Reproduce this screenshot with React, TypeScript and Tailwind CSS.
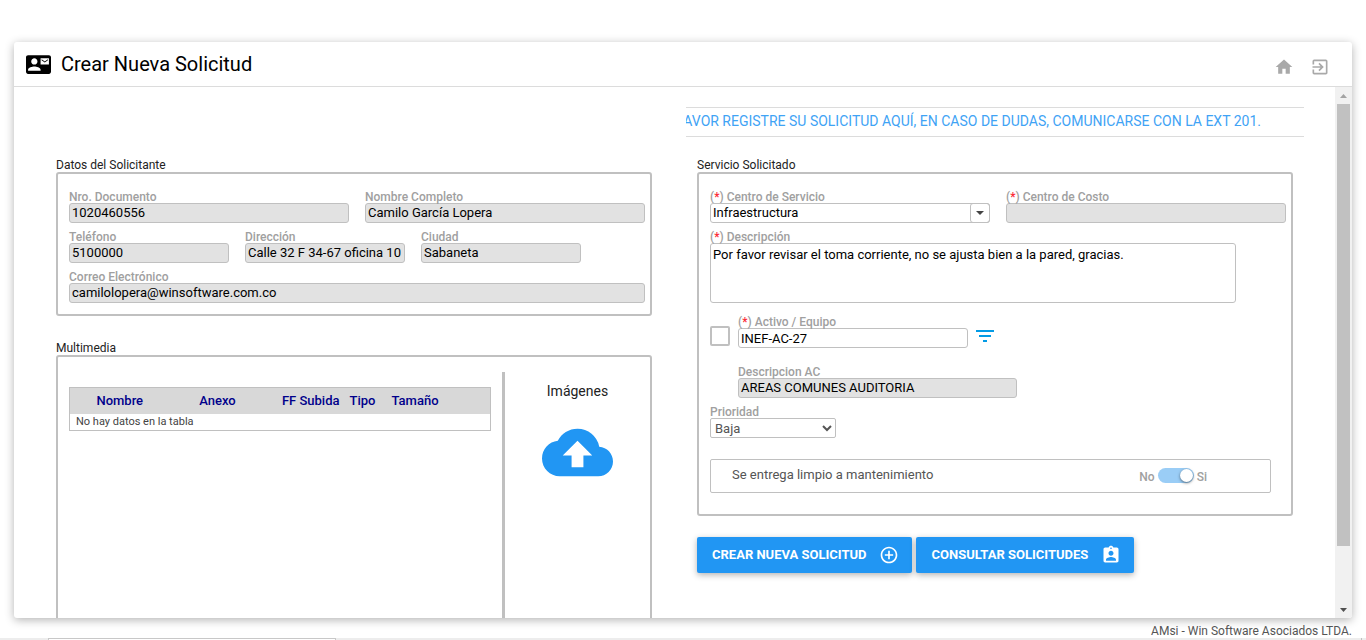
import { useState } from "react";
import type { ReactNode } from "react";
import {
  MdAssignmentInd,
  MdCloudUpload,
  MdContactMail,
  MdControlPoint,
  MdExitToApp,
  MdFilterList,
  MdHome,
} from "react-icons/md";

const CONTROL =
  "block h-5 w-full min-w-0 rounded-[3px] border border-[#c0c0c0] px-0.5 text-[13px] leading-4 text-black outline-none";

function Label({ id, required, children }: { id: string; required?: boolean; children: ReactNode }) {
  return (
    <label htmlFor={id} className="block h-3 text-xs leading-3 font-medium whitespace-nowrap text-[#a0a0a0]">
      {required && (
        <>
          (<span className="text-red-500">*</span>){" "}
        </>
      )}
      {children}
    </label>
  );
}

function TextField({
  id,
  label,
  value,
  required,
  editable,
}: {
  id: string;
  label: string;
  value: string;
  required?: boolean;
  editable?: boolean;
}) {
  return (
    <div className="min-w-0">
      <Label id={id} required={required}>
        {label}
      </Label>
      <input
        id={id}
        type="text"
        defaultValue={value}
        readOnly={!editable}
        className={`${CONTROL} ${editable ? "bg-white" : "bg-[#e2e2e2] pb-0.5"}`}
      />
    </div>
  );
}

function Group({ title, className, children }: { title: string; className?: string; children: ReactNode }) {
  return (
    <section>
      <h2 className="h-3.5 text-xs leading-3.5 text-[#222]">{title}</h2>
      <div className={`rounded-[3px] border-2 border-[#c0c0c0] ${className ?? ""}`}>{children}</div>
    </section>
  );
}

function ActionButton({ label, icon }: { label: string; icon: ReactNode }) {
  return (
    <button
      type="button"
      className="flex h-9 items-center gap-[13px] rounded-xs bg-[#2196f3] pr-[13px] pl-[15px] text-[13px] font-bold whitespace-nowrap text-white shadow-[0_2px_6px_rgba(0,0,0,0.3)]"
    >
      {label}
      {icon}
    </button>
  );
}

function RequesterGroup() {
  return (
    <Group title="Datos del Solicitante" className="flex flex-col gap-2 pt-[17px] pr-[5px] pb-[11px] pl-[11px]">
      <div className="grid grid-cols-2 gap-4">
        <TextField id="documento" label="Nro. Documento" value="1020460556" />
        <TextField id="nombre" label="Nombre Completo" value="Camilo García Lopera" />
      </div>
      <div className="grid grid-cols-[10fr_10fr_10fr_3fr] gap-4">
        <TextField id="telefono" label="Teléfono" value="5100000" />
        <TextField id="direccion" label="Dirección" value="Calle 32 F 34-67 oficina 10" />
        <TextField id="ciudad" label="Ciudad" value="Sabaneta" />
      </div>
      <TextField id="correo" label="Correo Electrónico" value="camilolopera@winsoftware.com.co" />
    </Group>
  );
}

function MediaGroup() {
  return (
    <Group title="Multimedia" className="flex min-h-80 pt-[15px]">
      <div className="flex-1 pt-[15px] pr-[11px] pl-[11px]">
        <table className="w-full table-fixed border-collapse border border-[#c0c0c0]">
          <colgroup>
            <col className="w-[100px]" />
            <col className="w-[96px]" />
            <col className="w-[74px]" />
            <col className="w-[36px]" />
            <col />
          </colgroup>
          <thead>
            <tr className="h-[26px] bg-[#d8d8d8] text-[13px] text-[#00008b]">
              <th className="p-0 font-medium">Nombre</th>
              <th className="p-0 font-medium">Anexo</th>
              <th className="p-0 text-right font-medium whitespace-nowrap">FF Subida</th>
              <th className="p-0 text-right font-medium">Tipo</th>
              <th className="p-0 pl-4 text-left font-medium">Tamaño</th>
            </tr>
          </thead>
          <tbody>
            <tr className="h-[17px]">
              <td colSpan={5} className="p-0 pl-1.5 text-[11px] leading-4 text-[#444]">
                No hay datos en la tabla
              </td>
            </tr>
          </tbody>
        </table>
      </div>
      <div className="flex w-[148px] flex-col items-center border-l-[3px] border-[#c0c0c0] pt-[11px]">
        <h3 className="text-sm leading-4 text-[#222]">Imágenes</h3>
        <button type="button" aria-label="Subir imágenes" className="mt-[18px] text-[#2196f3]">
          <MdCloudUpload size={71} />
        </button>
      </div>
    </Group>
  );
}

function ServiceGroup() {
  const [clean, setClean] = useState(true);
  return (
    <Group title="Servicio Solicitado" className="pt-[17px] pr-[5px] pb-[21px] pl-[11px]">
      <div className="grid grid-cols-2 gap-4">
        <div>
          <Label id="servicio" required>
            Centro de Servicio
          </Label>
          <div className="relative">
            <select id="servicio" className={`${CONTROL} appearance-none bg-white`}>
              <option>Infraestructura</option>
            </select>
            <span className="pointer-events-none absolute inset-y-0 right-0 flex w-5 items-center justify-center rounded-[3px] border border-[#c0c0c0]">
              <svg width="8" height="4" viewBox="0 0 8 4" fill="#444" aria-hidden="true">
                <path d="M0 0h8L4 4z" />
              </svg>
            </span>
          </div>
        </div>
        <TextField id="costo" label="Centro de Costo" value="" required />
      </div>
      <div className="mt-2 pr-[50px]">
        <Label id="descripcion" required>
          Descripción
        </Label>
        <textarea
          id="descripcion"
          defaultValue="Por favor revisar el toma corriente, no se ajusta bien a la pared, gracias."
          className="block h-[60px] w-full resize-none rounded-[3px] border border-[#c0c0c0] px-0.5 py-[3px] text-[13px] leading-4 text-black outline-none"
        />
      </div>
      <div className="mt-[13px] flex items-end gap-2">
        <input
          type="checkbox"
          aria-label="Activar activo o equipo"
          className="mb-0.5 size-5 appearance-none rounded-xs border-2 border-[#c0c0c0] bg-white checked:bg-[#2196f3]"
        />
        <div className="w-[230px]">
          <TextField id="activo" label="Activo / Equipo" value="INEF-AC-27" required editable />
        </div>
        <button type="button" aria-label="Filtrar" className="-ml-[3px] text-[#039be5]">
          <MdFilterList size={24} />
        </button>
      </div>
      <div className="mt-[18px] ml-7 w-[279px]">
        <TextField id="descripcion-ac" label="Descripcion AC" value="AREAS COMUNES AUDITORIA" />
      </div>
      <div className="mt-2 w-[126px]">
        <Label id="prioridad">Prioridad</Label>
        <select
          id="prioridad"
          className="block h-5 w-full rounded-xs border border-[#c0c0c0] bg-white text-[13px] leading-4 text-[#555] outline-none"
        >
          <option>Baja</option>
        </select>
      </div>
      <div className="mt-[21px] mr-[15px] flex h-[34px] items-center justify-between rounded-xs border border-[#c0c0c0] pr-[63px] pb-0.5 pl-[21px]">
        <span className="text-[13px] text-[#555]">Se entrega limpio a mantenimiento</span>
        <label className="flex items-center gap-[3px] text-xs font-medium text-[#a0a0a0]">
          <span className="pt-1">No</span>
          <input
            type="checkbox"
            checked={clean}
            onChange={(e) => setClean(e.target.checked)}
            aria-label="Se entrega limpio a mantenimiento"
            className="h-[15px] w-9 appearance-none rounded-full bg-[#ccc] p-px before:block before:size-[13px] before:rounded-full before:bg-white before:shadow-[0_1px_3px_rgba(0,0,0,0.5)] checked:bg-[#9acdf6] checked:before:ml-auto"
          />
          <span className="pt-1">Si</span>
        </label>
      </div>
    </Group>
  );
}

function ScrollTrack() {
  return (
    <div aria-hidden="true" className="flex w-[17px] shrink-0 flex-col bg-[#f1f1f1]">
      <div className="flex h-[17px] shrink-0 items-center justify-center">
        <svg width="7" height="4" viewBox="0 0 7 4" fill="#a3a3a3">
          <path d="M0 4h7L3.500 0z" />
        </svg>
      </div>
      <div className="flex min-h-0 flex-1 flex-col px-0.5">
        <div className="h-[89%] bg-[#c1c1c1]" />
      </div>
      <div className="flex h-[17px] shrink-0 items-center justify-center">
        <svg width="7" height="4" viewBox="0 0 7 4" fill="#505050">
          <path d="M0 0h7L3.500 4z" />
        </svg>
      </div>
    </div>
  );
}

export default function App() {
  return (
    <div className="flex h-screen flex-col overflow-hidden bg-white font-[Roboto,sans-serif] text-black">
      <main className="mx-3.5 mt-[42px] flex min-h-0 flex-1 flex-col overflow-hidden rounded-[3px] bg-white shadow-[0_2px_10px_rgba(0,0,0,0.3)]">
        <header className="flex h-[45px] shrink-0 items-center border-b border-[#dcdcdc] pr-[22px] pl-3">
          <MdContactMail size={25} />
          <h1 className="ml-2.5 text-xl">Crear Nueva Solicitud</h1>
          <nav className="mt-1.5 ml-auto flex gap-4 text-[#a9a9a9]">
            <a href="#inicio" aria-label="Inicio">
              <MdHome size={20} />
            </a>
            <a href="#salir" aria-label="Salir">
              <MdExitToApp size={20} />
            </a>
          </nav>
        </header>
        <div className="flex min-h-0 flex-1">
          <div className="grid min-w-0 flex-1 grid-cols-2 gap-[23px] overflow-hidden px-[31px]">
            <div className="flex min-w-0 flex-col gap-[25px] px-[11px] pt-[71px]">
              <RequesterGroup />
              <MediaGroup />
            </div>
            <div className="min-w-0 pt-5">
              <div className="flex h-[30px] items-center justify-end overflow-hidden border-y border-[#dcdcdc] pr-[43px] pb-0.5 text-sm whitespace-nowrap text-[#3fa3f5]">
                FAVOR REGISTRE SU SOLICITUD AQUÍ, EN CASO DE DUDAS, COMUNICARSE CON LA EXT 201.
              </div>
              <div className="px-[11px] pt-[21px]">
                <ServiceGroup />
                <div className="mt-[21px] flex gap-1">
                  <ActionButton label="CREAR NUEVA SOLICITUD" icon={<MdControlPoint size={20} />} />
                  <ActionButton label="CONSULTAR SOLICITUDES" icon={<MdAssignmentInd size={20} />} />
                </div>
              </div>
            </div>
          </div>
          <ScrollTrack />
        </div>
      </main>
      <footer className="shrink-0">
        <p className="h-5 pt-1.5 pr-3.5 text-right text-xs leading-3.5 text-[#555]">
          AMsi - Win Software Asociados LTDA.
        </p>
        <div className="flex h-0.5 bg-[#ededed] pl-12">
          <div className="w-72 border border-b-0 border-[#c8c8c8] bg-white" />
          <div className="mr-1 ml-auto w-px bg-[#c0c0c0]" />
        </div>
      </footer>
    </div>
  );
}
